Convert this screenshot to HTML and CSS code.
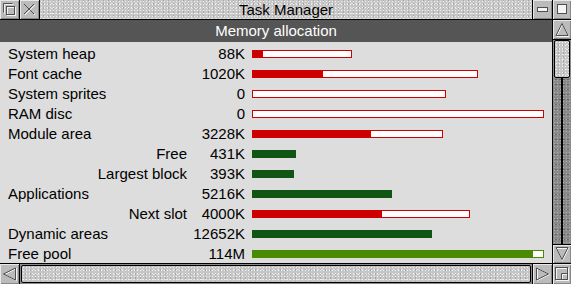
FILE: index.html
```html
<!DOCTYPE html>
<html>
<head>
	<meta charset="utf-8">
	<title>Task Manager</title>
	<link rel="stylesheet" href="styles.css">
</head>
<body>
<div class="window">
	<div class="titlebar">
		<div class="tool">
			<svg width="19" height="19" viewBox="0 0 19 19"><path d="M4.5 13.5V4.5H13.5" class="hi"/><path d="M3.5 12.5V3.5H12.5" class="ic"/><rect x="7.5" y="7.5" width="8" height="8" class="hi"/><rect x="6.5" y="6.5" width="8" height="8" class="ic"/></svg>
		</div>
		<div class="tool">
			<svg width="19" height="19" viewBox="0 0 19 19"><path d="M5 5L15 15M15 5L5 15" class="hi"/><path d="M4 4L14 14M14 4L4 14" class="ic"/></svg>
		</div>
		<div class="title">Task Manager</div>
		<div class="tool">
			<svg width="19" height="19" viewBox="0 0 19 19"><rect x="4.5" y="7.5" width="10" height="4" class="box"/></svg>
		</div>
		<div class="tool last">
			<svg width="18" height="19" viewBox="0 0 18 19"><rect x="4.5" y="4.5" width="9" height="9" class="box"/></svg>
		</div>
	</div>
	<div class="middle">
		<div class="pane">
			<div class="heading">Memory allocation</div>
			<div class="rows">
				<div class="row"><span class="label">System heap</span><span class="value">88K</span><span class="bar" style="width:100px"><span class="fill" style="width:11px"></span></span></div>
				<div class="row"><span class="label">Font cache</span><span class="value">1020K</span><span class="bar" style="width:226px"><span class="fill" style="width:71px"></span></span></div>
				<div class="row"><span class="label">System sprites</span><span class="value">0</span><span class="bar" style="width:194px"></span></div>
				<div class="row"><span class="label">RAM disc</span><span class="value">0</span><span class="bar" style="width:292px"></span></div>
				<div class="row"><span class="label">Module area</span><span class="value">3228K</span><span class="bar" style="width:191px"><span class="fill" style="width:119px"></span></span></div>
				<div class="row"><span class="label sub">Free</span><span class="value">431K</span><span class="bar solid" style="width:44px"></span></div>
				<div class="row"><span class="label sub">Largest block</span><span class="value">393K</span><span class="bar solid" style="width:42px"></span></div>
				<div class="row"><span class="label">Applications</span><span class="value">5216K</span><span class="bar solid" style="width:140px"></span></div>
				<div class="row"><span class="label sub">Next slot</span><span class="value">4000K</span><span class="bar" style="width:218px"><span class="fill" style="width:130px"></span></span></div>
				<div class="row"><span class="label">Dynamic areas</span><span class="value">12652K</span><span class="bar solid" style="width:180px"></span></div>
				<div class="row"><span class="label">Free pool</span><span class="value">114M</span><span class="bar pool" style="width:292px"><span class="fill" style="width:281px"></span></span></div>
			</div>
		</div>
		<div class="vscroll">
			<div class="sbtn up">
				<svg width="18" height="19" viewBox="0 0 18 19"><path d="M9.5 4.5L15.5 16.5H3.5Z" class="hi"/><path d="M9 3.5L15 15.5H3Z" class="ic"/></svg>
			</div>
			<div class="well">
				<div class="thumb"></div>
				<div class="groove"></div>
			</div>
			<div class="sbtn down">
				<svg width="18" height="18" viewBox="0 0 18 18"><path d="M3.5 3.5H15.5L9.5 15.5Z" class="hi"/><path d="M3 2.5H15L9 14.5Z" class="ic"/></svg>
			</div>
		</div>
	</div>
	<div class="hscroll">
		<div class="sbtn left">
			<svg width="19" height="20" viewBox="0 0 19 20"><path d="M4.5 10.5L16.5 4.5V16.5Z" class="hi"/><path d="M3.5 10L15.5 4V16Z" class="ic"/></svg>
		</div>
		<div class="track"><div class="slider"></div></div>
		<div class="sbtn right">
			<svg width="19" height="20" viewBox="0 0 19 20"><path d="M4.5 4.5L16.5 10.5L4.5 16.5Z" class="hi"/><path d="M3.5 4L15.5 10L3.5 16Z" class="ic"/></svg>
		</div>
		<div class="sbtn resize">
			<svg width="18" height="20" viewBox="0 0 18 20"><rect x="3.5" y="4.5" width="12" height="12" class="hi"/><rect x="2.5" y="3.5" width="12" height="12" class="ic"/><path d="M8.5 15V9.5H14" class="ic"/><path d="M9.5 15V10.5H14" class="hi"/></svg>
		</div>
	</div>
</div>
</body>
</html>
```

FILE: styles.css
```css
html, body{
	margin: 0;
	padding: 0;
	background: #ddd;
}
.window{
	width: 571px;
	height: 284px;
	display: flex;
	flex-direction: column;
	overflow: hidden;
	font-family: "Liberation Sans", Arial, sans-serif;
	font-size: 15px;
	color: #000;
}
/* textured grey used by title bar and scroll parts */
.titlebar .title, .slider, .thumb{
	background-color: #c6c6c6;
	background-image:
		radial-gradient(circle, #f2f2f2 0.7px, transparent 0.9px),
		radial-gradient(circle, #a8a8a8 0.7px, transparent 0.9px),
		radial-gradient(circle, #e4e4e4 0.7px, transparent 0.9px);
	background-size: 3px 3px, 5px 4px, 4px 5px;
	background-position: 0 0, 1px 2px, 2px 1px;
}
.titlebar{
	height: 19px;
	display: flex;
	border-bottom: 1px solid #000;
}
.tool{
	width: 19px;
	height: 19px;
	background: #bbb;
	border-right: 1px solid #000;
	box-shadow: inset 1px 1px 0 #e8e8e8, inset -1px -1px 0 #888;
}
.tool.last{
	width: 18px;
	border-right: none;
}
.tool svg, .sbtn svg{
	display: block;
}
.ic{
	fill: none;
	stroke: #505050;
	stroke-width: 1;
}
.hi{
	fill: none;
	stroke: #f4f4f4;
	stroke-width: 1;
}
.box{
	fill: #f4f4f4;
	stroke: #505050;
	stroke-width: 1;
}
.title{
	flex: 1;
	text-align: center;
	line-height: 19px;
	border-right: 1px solid #000;
}
.middle{
	height: 243px;
	display: flex;
}
.pane{
	flex: 1;
	background: #ddd;
	border-right: 1px solid #000;
	overflow: hidden;
}
.heading{
	height: 22px;
	line-height: 22px;
	background: #555;
	color: #fff;
	text-align: center;
}
.rows{
	padding-top: 2px;
}
.row{
	height: 20px;
	line-height: 20px;
	display: grid;
	grid-template-columns: 179px 58px 1fr;
	padding-left: 8px;
	align-items: center;
}
.label.sub{
	text-align: right;
}
.value{
	text-align: right;
}
.bar{
	display: block;
	box-sizing: border-box;
	height: 8px;
	margin-left: 7px;
	border: 1px solid #cc0000;
	background: #fff;
}
.bar .fill{
	display: block;
	height: 100%;
	margin: -1px 0 0 -1px;
	height: 8px;
	background: #cc0000;
}
.bar.solid{
	border: none;
	background: #115514;
}
.bar.pool{
	border-color: #4a8a00;
}
.bar.pool .fill{
	background: #4a8a00;
}
.vscroll{
	width: 18px;
	display: flex;
	flex-direction: column;
	background: #bbb;
}
.sbtn{
	background: #bbb;
	box-shadow: inset 1px 1px 0 #e8e8e8, inset -1px -1px 0 #888;
}
.sbtn.up{
	height: 19px;
	border-bottom: 1px solid #000;
}
.sbtn.down{
	height: 18px;
	border-top: 1px solid #000;
}
.well{
	flex: 1;
	display: flex;
	flex-direction: column;
	background-color: #8a8a8a;
	background-image:
		radial-gradient(circle, #b0b0b0 0.7px, transparent 0.9px),
		radial-gradient(circle, #666 0.7px, transparent 0.9px);
	background-size: 3px 3px, 4px 5px;
	background-position: 0 0, 1px 2px;
}
.thumb{
	height: 36px;
	margin: 0 1px 0 1px;
	border: 1px solid #000;
	border-radius: 2px;
}
.groove{
	flex: 1;
	width: 2px;
	margin-left: 8px;
	background: #000;
}
.hscroll{
	height: 20px;
	display: flex;
	border-top: 1px solid #000;
	background: #bbb;
}
.sbtn.left{
	width: 19px;
	border-right: 1px solid #000;
}
.track{
	flex: 1;
	display: flex;
	padding: 1px 1px;
	background: #8a8a8a;
}
.slider{
	flex: 1;
	border: 1px solid #000;
	border-radius: 2px;
}
.sbtn.right{
	width: 19px;
	border-left: 1px solid #000;
}
.sbtn.resize{
	width: 18px;
	border-left: 1px solid #000;
}
```
